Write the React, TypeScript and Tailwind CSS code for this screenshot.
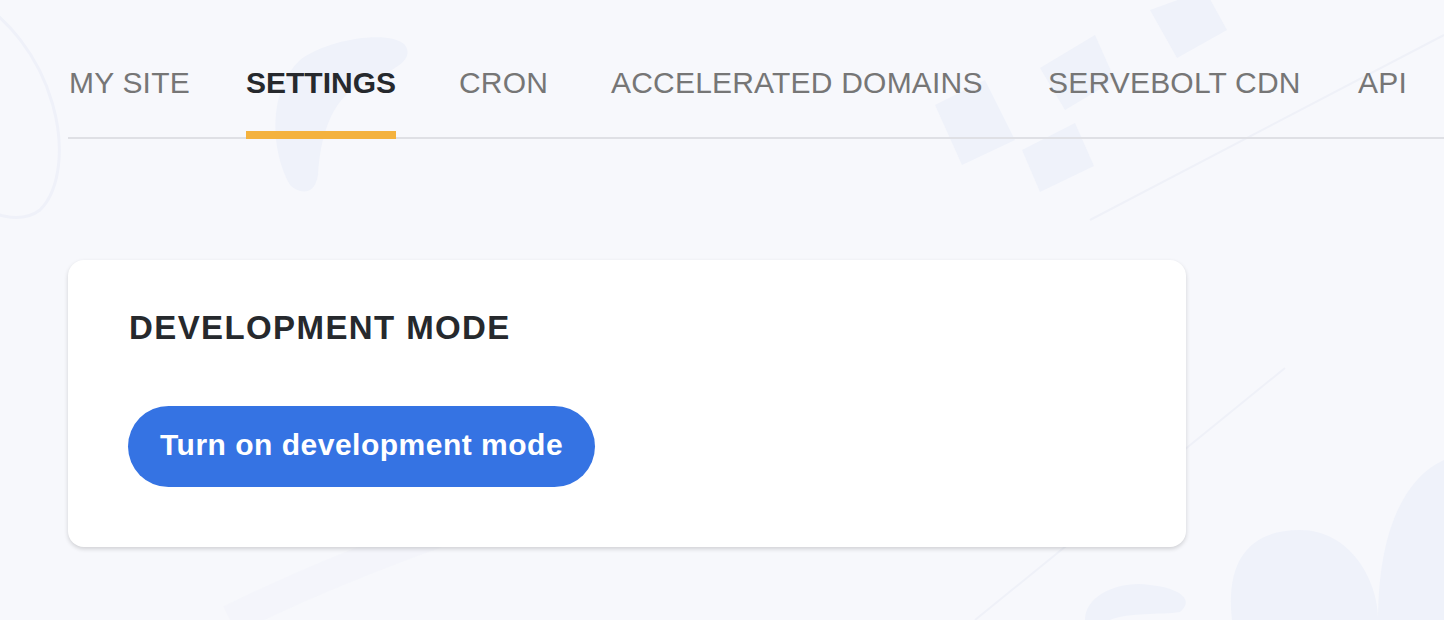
import React from "react";

const tabs = [
  { label: "MY SITE", w: "w-[116px]" },
  { label: "SETTINGS", w: "w-[150px]", active: true },
  { label: "CRON", w: "w-[90px]" },
  { label: "ACCELERATED DOMAINS", w: "w-[375px]" },
  { label: "SERVEBOLT CDN", w: "w-[248px]" },
  { label: "API", w: "w-[47px]" },
];

const Decor = () => (
  <svg className="absolute inset-0 w-full h-full" viewBox="0 0 1444 620" preserveAspectRatio="none">
    {/* left arc */}
    <path d="M-40 -10 C 60 40, 80 170, 40 210 C 20 225, -10 215, -30 200" fill="none" stroke="#eff1f9" strokeWidth="3" />
    {/* blob near settings */}
    <path d="M290 185 C 270 150, 268 90, 300 60 C 330 38, 390 30, 405 45 C 415 60, 395 70, 360 85 C 330 100, 320 140, 318 175 C 315 195, 300 195, 290 185 Z" fill="#eff2fa" />
    {/* diamonds */}
    <path d="M1150 10 L1205 -10 L1227 30 L1177 58 Z" fill="#eff2fa" />
    <path d="M1040 68 L1095 35 L1115 80 L1065 110 Z" fill="#eff2fa" />
    <path d="M935 105 L985 80 L1015 140 L962 165 Z" fill="#eff2fa" />
    <path d="M1022 150 L1075 123 L1094 166 L1040 192 Z" fill="#eff2fa" />
    {/* diagonal lines */}
    <path d="M1090 220 L1444 35" stroke="#eff1f8" strokeWidth="2" fill="none" />
    <path d="M975 620 L1285 368" stroke="#eff1f8" strokeWidth="2" fill="none" />
    <path d="M230 620 C 350 560, 520 500, 640 470" stroke="#f1f3fa" strokeWidth="30" fill="none" opacity="0.6" />
    {/* bottom-right blobs */}
    <path d="M1085 620 C 1085 595, 1120 580, 1150 585 C 1180 588, 1195 600, 1180 612 C 1160 615, 1130 612, 1110 620 Z" fill="#eff2fa" />
    <path d="M1232 620 C 1225 560, 1250 530, 1300 530 C 1350 530, 1378 580, 1378 620 Z" fill="#eff2fa" />
    <path d="M1378 620 C 1378 540, 1400 480, 1444 460 L1444 620 Z" fill="#eff2fa" />
  </svg>
);

export default function App() {
  return (
    <div
      className="relative w-[1444px] h-[620px] overflow-hidden bg-[#f7f8fc]"
      style={{ fontFamily: '"Liberation Sans", Arial, sans-serif' }}
    >
      <Decor />
      <div className="relative">
        {/* TABS */}
        <nav className="ml-[68px] mt-[65px] flex gap-[62px] border-b-2 border-[#dfe0e5]">
          {tabs.map((t) => (
            <div
              key={t.label}
              className={`${t.w} -mb-[2px] pb-[30px] border-b-[8px] whitespace-nowrap text-[30px] leading-[36px] ${
                t.active
                  ? "border-[#f4b23e] font-bold text-[#26292d]"
                  : "pl-[1px] border-transparent text-[#767676] tracking-[0.2px]"
              }`}
            >
              {t.label}
            </div>
          ))}
        </nav>

        {/* CARD */}
        <div className="ml-[68px] mt-[121px] w-[1118px] rounded-[16px] bg-white pl-[61px] pt-[48px] pb-[60px] shadow-[0_2px_4px_rgba(0,0,0,0.16)]">
          <h2 className="text-[33px] leading-[40px] font-bold tracking-[1.4px] text-[#26292d]">DEVELOPMENT MODE</h2>
          <button className="mt-[58px] -ml-[1px] h-[81px] px-[32px] pb-[4px] rounded-full bg-[#3573e3] text-white text-[30px] leading-[36px] font-bold tracking-[0.5px]">
            Turn on development mode
          </button>
        </div>
      </div>
    </div>
  );
}
